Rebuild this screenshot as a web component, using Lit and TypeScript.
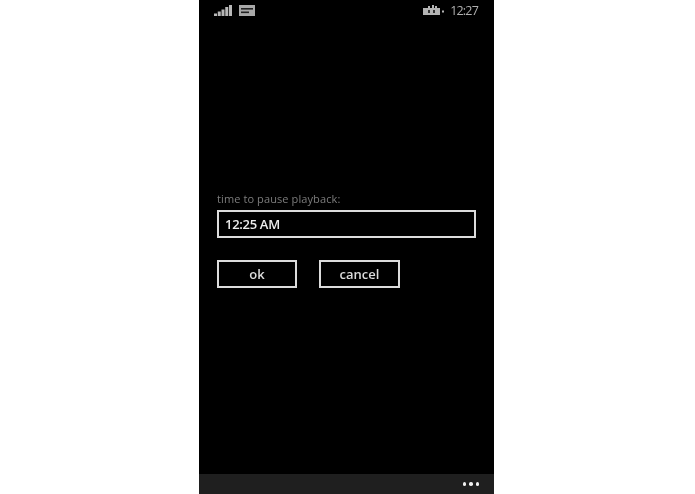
import { LitElement, html, css } from "lit";
import { customElement } from "lit/decorators.js";

@customElement("app-root")
export class AppRoot extends LitElement {
  static styles = css`
    :host { display: block; width: 695px; height: 494px; background: #fff; overflow: hidden;
      font-family: "Open Sans", "Noto Sans", sans-serif; }
    .phone { margin-left: 199px; width: 295px; height: 494px; background: #000; display: flex; flex-direction: column;
      filter: blur(0.5px); }
    .status { height: 20px; display: flex; align-items: center; padding: 0 16px 0 15px; gap: 7px; }
    .status svg { display: block; }
    .spacer { flex: 1; }
    .time { font-size: 12.5px; color: #b0b0b0; margin-left: -1px; letter-spacing: -0.8px; }
    .main { flex: 1; display: flex; flex-direction: column; padding: 172px 18px 0; }
    .label { font-size: 11px; line-height: 14px; color: #7c7c7c; height: 18px; letter-spacing: 0.1px; }
    .input { height: 28px; width: 259px; box-sizing: border-box; border: 2px solid #dcdcdc; color: #ececec;
      font-size: 13px; font-weight: 600; line-height: 25px; padding-left: 6px; letter-spacing: -0.3px; }
    .buttons { display: flex; gap: 22px; margin-top: 22px; }
    .btn { height: 28px; width: 81px; box-sizing: border-box; border: 2px solid #dcdcdc; color: #dcdcdc;
      font-size: 13px; font-weight: 600; line-height: 25px; text-align: center; }
    .btn.ok { width: 80px; }
    .appbar { height: 20px; background: #1f1f1f; display: flex; justify-content: flex-end; align-items: center;
      gap: 3px; padding-right: 15px; }
    .dot { width: 3.5px; height: 3.5px; border-radius: 50%; background: #f0f0f0; }
  `;

  render() {
    return html`
      <div class="phone">
        <div class="status">
          <svg width="18" height="11" viewBox="0 0 18 11" fill="#b8b8b8">
            <rect x="0" y="8.5" width="3" height="2.5" />
            <rect x="3.75" y="6.5" width="3" height="4.5" />
            <rect x="7.5" y="4.5" width="3" height="6.5" />
            <rect x="11.25" y="2" width="3" height="9" />
            <rect x="15" y="0" width="3" height="11" />
          </svg>
          <svg width="16" height="11" viewBox="0 0 16 11">
            <rect x="0" y="0" width="16" height="11" fill="#a8a8a8" />
            <rect x="2" y="3" width="12" height="1.6" fill="#222" />
            <rect x="2" y="6.5" width="8" height="1.6" fill="#222" />
          </svg>
          <div class="spacer"></div>
          <svg width="21" height="11" viewBox="0 0 21 11" fill="#b4b4b4">
            <path d="M0 3h17v7H0z" />
            <path d="M5 1h2v2H5zM9 0h2v3H9zM12 1h2v2h-2z" />
            <rect x="19" y="5.5" width="2" height="2" />
            <path d="M5 5h2v3H5zM10 5h2v3h-2z" fill="#333" />
          </svg>
          <span class="time">12:27</span>
        </div>
        <div class="main">
          <div class="label">time to pause playback:</div>
          <div class="input">12:25 AM</div>
          <div class="buttons">
            <div class="btn ok">ok</div>
            <div class="btn">cancel</div>
          </div>
        </div>
        <div class="appbar">
          <span class="dot"></span><span class="dot"></span><span class="dot"></span>
        </div>
      </div>
    `;
  }
}
